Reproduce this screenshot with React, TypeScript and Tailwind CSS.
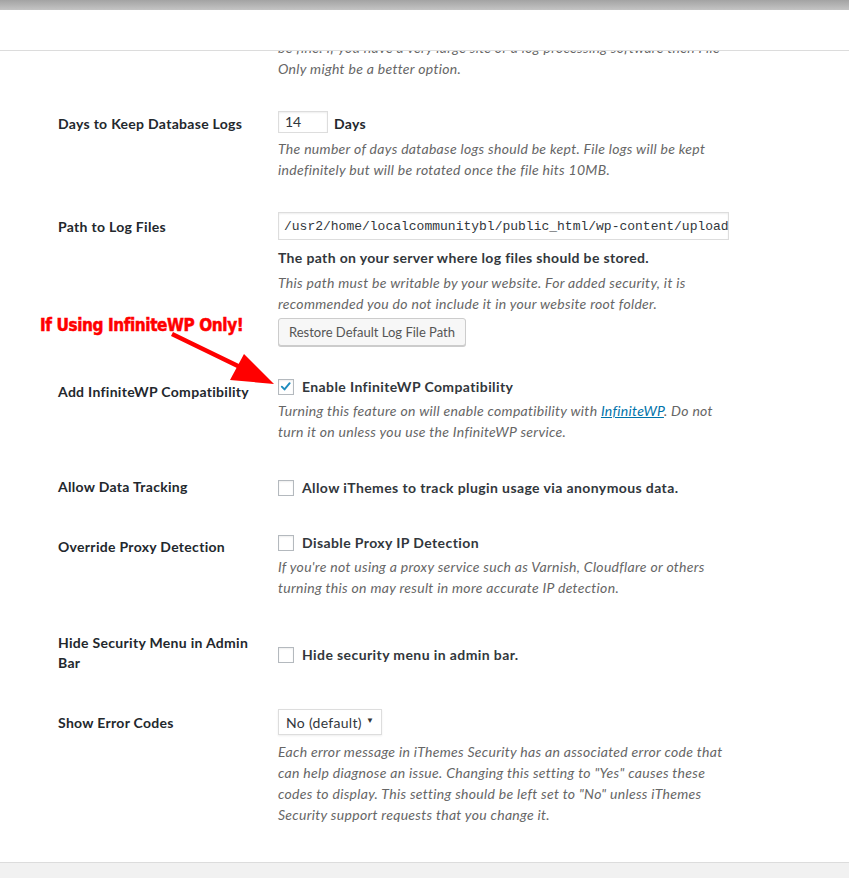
import React from "react";

const font = { fontFamily: "Lato, 'Open Sans', 'Liberation Sans', sans-serif" };

function Check({ checked = false }: { checked?: boolean }) {
  return (
    <div className="relative w-[16px] h-[16px] shrink-0 border border-[#b4b9be] bg-white shadow-[inset_0_1px_2px_rgba(0,0,0,0.07)]">
      {checked && (
        <svg viewBox="0 0 16 16" className="absolute left-[0px] top-[0px] w-[14px] h-[14px]">
          <path d="M3.2 7.6 L6.3 10.8 L12.2 3.6" fill="none" stroke="#1e8cbe" strokeWidth="2.2" strokeLinecap="round" strokeLinejoin="round" />
        </svg>
      )}
    </div>
  );
}

function Label({ children, pt }: { children: React.ReactNode; pt: string }) {
  return (
    <div className={`w-[200px] mr-[20px] shrink-0 text-[14px] font-bold text-[#23282d] leading-[18px] tracking-[0.3px] ${pt}`}>{children}</div>
  );
}

function Desc({ children, mt }: { children: React.ReactNode; mt: string }) {
  return <p className={`text-[14px] italic leading-[21px] text-[#666] tracking-[0.3px] ${mt}`}>{children}</p>;
}

function CheckRow({ checked, text }: { checked?: boolean; text: string }) {
  return (
    <div className="flex items-center h-[21px]">
      <Check checked={checked} />
      <span className="ml-[8px] text-[14px] font-bold text-[#32373c] tracking-[0.4px]">{text}</span>
    </div>
  );
}

export default function App() {
  return (
    <div className="relative w-[849px] h-[878px] overflow-hidden bg-white flex flex-col" style={font}>
      <div className="h-[10px] shrink-0 bg-gradient-to-b from-[#a3a3a3] to-[#c4c4c4]" />
      <div className="h-[41px] shrink-0 bg-white border-b border-[#dcdcdc]" />
      <div className="flex-1 overflow-hidden pl-[58px]">
        <div className="flex -mt-[14px]">
          <div className="w-[220px] shrink-0" />
          <Desc mt="mt-0">
            be fine. If you have a very large site or a log processing software then File
            <br />
            Only might be a better option.
          </Desc>
        </div>

        {/* Days */}
        <div className="flex mt-[15px]">
          <Label pt="pt-[21px]">Days to Keep Database Logs</Label>
          <div className="pt-[15px] pb-[17px]">
            <div className="flex items-center">
              <div className="w-[50px] h-[22px] border border-[#ddd] shadow-[inset_0_1px_2px_rgba(0,0,0,0.07)] text-[14px] text-[#32373c] pl-[6px] leading-[20px]">14</div>
              <span className="ml-[6px] mt-[4px] text-[14px] font-bold text-[#23282d] tracking-[0.3px]">Days</span>
            </div>
            <Desc mt="mt-[4px]">
              The number of days database logs should be kept. File logs will be kept
              <br />
              indefinitely but will be rotated once the file hits 10MB.
            </Desc>
          </div>
        </div>

        {/* Path */}
        <div className="flex">
          <Label pt="pt-[21px]">Path to Log Files</Label>
          <div className="pt-[15px] pb-[15px]">
            <input
              readOnly
              value="/usr2/home/localcommunitybl/public_html/wp-content/uploads/ithemes-security/logs"
              className="block w-[451px] h-[28px] border border-[#ddd] shadow-[inset_0_1px_2px_rgba(0,0,0,0.07)] pl-[5px] pr-0 text-[13px] text-[#32373c] outline-none"
              style={{ fontFamily: "'Liberation Mono', 'DejaVu Sans Mono', monospace" }}
            />
            <p className="mt-[7px] text-[14px] font-bold leading-[21px] text-[#32373c] tracking-[0.35px]">The path on your server where log files should be stored.</p>
            <Desc mt="mt-[4px]">
              This path must be writable by your website. For added security, it is
              <br />
              recommended you do not include it in your website root folder.
            </Desc>
            <button className="mt-[4px] h-[28px] px-[10px] rounded-[3px] border border-[#ccc] bg-[#f7f7f7] shadow-[0_1px_0_#ccc] text-[13px] text-[#555] leading-[26px]">
              Restore Default Log File Path
            </button>
          </div>
        </div>

        {/* InfiniteWP */}
        <div className="flex">
          <Label pt="pt-[22px]">Add InfiniteWP Compatibility</Label>
          <div className="pt-[15px] pb-[15px]">
            <CheckRow checked text="Enable InfiniteWP Compatibility" />
            <Desc mt="mt-[3px]">
              Turning this feature on will enable compatibility with{" "}
              <a className="text-[#0073aa] underline">InfiniteWP</a>. Do not
              <br />
              turn it on unless you use the InfiniteWP service.
            </Desc>
          </div>
        </div>

        {/* Data tracking */}
        <div className="flex">
          <Label pt="pt-[21px]">Allow Data Tracking</Label>
          <div className="pt-[20px] pb-[20px]">
            <CheckRow text="Allow iThemes to track plugin usage via anonymous data." />
          </div>
        </div>

        {/* Proxy */}
        <div className="flex">
          <Label pt="pt-[20px]">Override Proxy Detection</Label>
          <div className="pt-[14px] pb-[16px]">
            <CheckRow text="Disable Proxy IP Detection" />
            <Desc mt="mt-[3px]">
              If you're not using a proxy service such as Varnish, Cloudflare or others
              <br />
              turning this on may result in more accurate IP detection.
            </Desc>
          </div>
        </div>

        {/* Hide security */}
        <div className="flex">
          <div className="w-[200px] mr-[20px] shrink-0 text-[14px] font-bold text-[#23282d] leading-[20px] tracking-[0.3px] pt-[19px] pb-[21px]">
            Hide Security Menu in Admin
            <br />
            Bar
          </div>
          <div className="pt-[30px]">
            <CheckRow text="Hide security menu in admin bar." />
          </div>
        </div>

        {/* Error codes */}
        <div className="flex">
          <Label pt="pt-[20px]">Show Error Codes</Label>
          <div className="pt-[15px]">
            <div className="relative w-[104px] h-[26px]">
              <select className="appearance-none w-full h-full border border-[#ddd] bg-white pl-[7px] text-[14px] text-[#32373c] outline-none shadow-[0_1px_2px_rgba(0,0,0,0.07)] tracking-[0.3px]" style={font}>
                <option>No (default)</option>
                <option>Yes</option>
              </select>
              <span className="pointer-events-none absolute right-[8px] top-[5px] text-[8px] text-[#333]">▼</span>
            </div>
            <Desc mt="mt-[6px]">
              Each error message in iThemes Security has an associated error code that
              <br />
              can help diagnose an issue. Changing this setting to "Yes" causes these
              <br />
              codes to display. This setting should be left set to "No" unless iThemes
              <br />
              Security support requests that you change it.
            </Desc>
          </div>
        </div>
      </div>
      <div className="h-[16px] shrink-0 border-t border-[#dcdcdc] bg-[#f1f1f1]" />

      {/* annotation overlay */}
      <div
        className="absolute left-[40px] top-[313px] text-[17px] font-bold text-[#ff0000] leading-[24px] tracking-[-0.4px] [-webkit-text-stroke:0.5px_#ff0000]"
        style={{ fontFamily: "'DejaVu Sans Condensed', 'Liberation Sans Narrow', 'DejaVu Sans', sans-serif", fontStretch: "condensed" }}
      >
        If Using InfiniteWP Only!
      </div>
      <svg className="absolute left-0 top-0 pointer-events-none" width="849" height="878">
        <line x1="172" y1="334" x2="240" y2="367" stroke="#ff0000" strokeWidth="4.5" />
        <polygon points="274,384 244,354 230,380" fill="#ff0000" />
      </svg>
    </div>
  );
}
